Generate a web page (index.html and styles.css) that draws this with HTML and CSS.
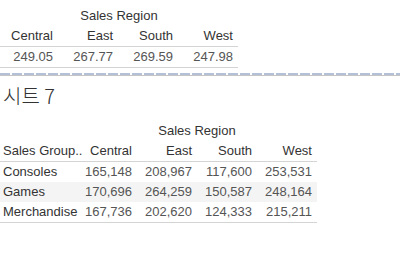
FILE: index.html
```html
<!DOCTYPE html>
<html>
<head>
<meta charset="utf-8">
<link rel="stylesheet" href="styles.css">
</head>
<body>
<section class="top">
  <div class="xt top-grid">
    <div class="region">Sales Region</div>
    <div class="hd r">Central</div>
    <div class="hd r">East</div>
    <div class="hd r">South</div>
    <div class="hd r">West</div>
    <div class="v r">249.05</div>
    <div class="v r">267.77</div>
    <div class="v r">269.59</div>
    <div class="v r">247.98</div>
  </div>
</section>
<div class="divider"></div>
<h1 class="title">시트 7</h1>
<section class="bottom">
  <div class="xt bottom-grid">
    <div class="blank"></div>
    <div class="region span4">Sales Region</div>
    <div class="hd l">Sales Group..</div>
    <div class="hd r">Central</div>
    <div class="hd r">East</div>
    <div class="hd r">South</div>
    <div class="hd r">West</div>
    <div class="rl">Consoles</div>
    <div class="v r">165,148</div>
    <div class="v r">208,967</div>
    <div class="v r">117,600</div>
    <div class="v r">253,531</div>
    <div class="rl alt">Games</div>
    <div class="v r alt">170,696</div>
    <div class="v r alt">264,259</div>
    <div class="v r alt">150,587</div>
    <div class="v r alt">248,164</div>
    <div class="rl last">Merchandise</div>
    <div class="v r last">167,736</div>
    <div class="v r last">202,620</div>
    <div class="v r last">124,333</div>
    <div class="v r last">215,211</div>
  </div>
</section>
</body>
</html>
```
FILE: styles.css
```css
html, body {
  margin: 0;
  padding: 0;
  background: #fff;
}
body {
  font-family: "Liberation Sans", Arial, sans-serif;
  font-size: 13px;
  color: #333;
  width: 400px;
  height: 262px;
  overflow: hidden;
}
.top {
  padding-top: 6px;
}
.xt {
  display: grid;
}
.xt > div {
  height: 20px;
  line-height: 20px;
  white-space: nowrap;
}
.top-grid {
  grid-template-columns: 58px 60px 60px 60px;
  width: 238px;
}
.top-grid .region {
  grid-column: 1 / 5;
  text-align: center;
}
.hd {
  color: #333;
  border-bottom: 1px solid #d4d4d4;
}
.r {
  text-align: right;
  padding-right: 5px;
}
.l {
  padding-left: 3px;
}
.v {
  color: #555;
}
.top-grid .v {
  border-bottom: 1px solid #d4d4d4;
}
.region {
  color: #333;
}
.divider {
  margin-top: 5px;
  height: 2px;
  background: repeating-linear-gradient(to right, #b3c0d6 0, #b3c0d6 10px, #fff 10px, #fff 12px);
  border-bottom: 1px solid #c4c4c4;
}
.title {
  margin: 0;
  padding: 8px 0 0 3px;
  height: 34px;
  box-sizing: border-box;
  font-family: "Noto Sans CJK KR", "Liberation Sans", sans-serif;
  font-weight: 300;
  font-size: 20px;
  line-height: 24px;
  color: #333;
}
.bottom {
  padding-top: 11px;
}
.bottom-grid {
  grid-template-columns: 77px 60px 60px 60px 60px;
  width: 317px;
}
.span4 {
  grid-column: 2 / 6;
  text-align: center;
}
.rl {
  padding-left: 3px;
  color: #333;
}
.alt {
  background: #f4f4f4;
}
.last {
  border-bottom: 1px solid #d4d4d4;
}
```
